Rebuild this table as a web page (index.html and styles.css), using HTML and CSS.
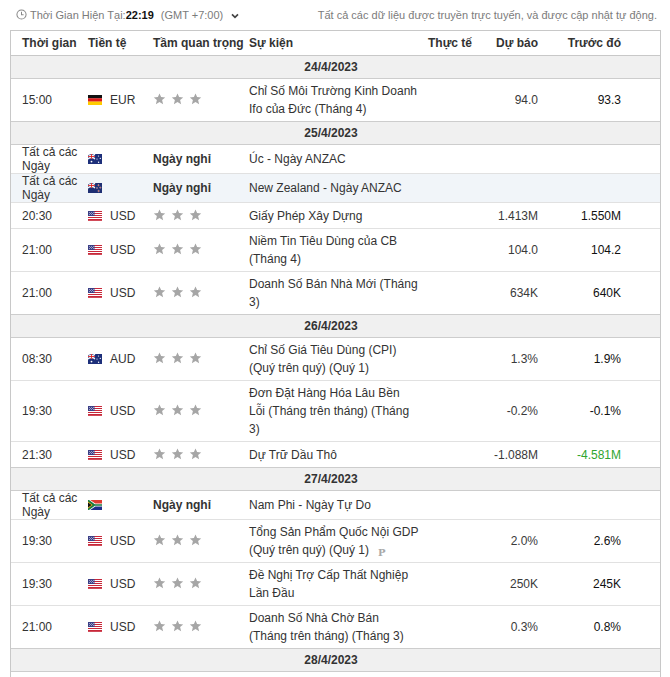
FILE: index.html
```html
<!DOCTYPE html>
<html lang="vi">
<head>
<meta charset="utf-8">
<title>Lịch kinh tế</title>
<link rel="stylesheet" href="styles.css">
</head>
<body>
<svg class="sprite" aria-hidden="true">
  <defs>
    <symbol id="star" viewBox="0 0 12 12"><path d="M6 0.4 L7.6 4.1 L11.7 4.4 L8.6 7.1 L9.6 11.2 L6 9 L2.4 11.2 L3.4 7.1 L0.3 4.4 L4.4 4.1 Z"/></symbol>
    <symbol id="f-de" viewBox="0 0 14 10"><rect width="14" height="3.4" fill="#111"/><rect y="3.3" width="14" height="3.4" fill="#dd1c1c"/><rect y="6.6" width="14" height="3.4" fill="#ffcc00"/></symbol>
    <symbol id="f-us" viewBox="0 0 14 10"><rect width="14" height="10" fill="#fff"/><g fill="#c8283a"><rect y="0" width="14" height="1"/><rect y="2" width="14" height="1"/><rect y="4" width="14" height="1"/><rect y="6" width="14" height="1"/><rect y="8" width="14" height="1.2"/><rect y="9.2" width="14" height="0.8"/></g><rect width="6.5" height="5" fill="#3b3f86"/><g fill="#d9dcf0"><rect x="1" y="1" width="1" height="0.6"/><rect x="3" y="1" width="1" height="0.6"/><rect x="5" y="1" width="1" height="0.6"/><rect x="2" y="2.2" width="1" height="0.6"/><rect x="4" y="2.2" width="1" height="0.6"/><rect x="1" y="3.4" width="1" height="0.6"/><rect x="3" y="3.4" width="1" height="0.6"/><rect x="5" y="3.4" width="1" height="0.6"/></g></symbol>
    <symbol id="f-au" viewBox="0 0 14 10"><rect width="14" height="10" fill="#1d2f7a"/><path d="M0 0 L7 5 M7 0 L0 5" stroke="#fff" stroke-width="1.2"/><path d="M3.5 0 V5 M0 2.5 H7" stroke="#fff" stroke-width="1.6"/><path d="M3.5 0 V5 M0 2.5 H7" stroke="#d22" stroke-width="0.9"/><g fill="#fff"><circle cx="3.5" cy="7.6" r="0.9"/><circle cx="10.5" cy="2" r="0.6"/><circle cx="12.3" cy="4.4" r="0.6"/><circle cx="9" cy="5" r="0.6"/><circle cx="10.6" cy="8.2" r="0.7"/></g></symbol>
    <symbol id="f-nz" viewBox="0 0 14 10"><rect width="14" height="10" fill="#1f2f73"/><path d="M0 0 L7 5 M7 0 L0 5" stroke="#fff" stroke-width="1.2"/><path d="M3.5 0 V5 M0 2.5 H7" stroke="#fff" stroke-width="1.6"/><path d="M3.5 0 V5 M0 2.5 H7" stroke="#d22" stroke-width="0.9"/><g fill="#d42" stroke="#fff" stroke-width="0.3"><circle cx="10.5" cy="2.2" r="0.7"/><circle cx="12.3" cy="4.6" r="0.7"/><circle cx="9" cy="5" r="0.6"/><circle cx="10.6" cy="8" r="0.8"/></g></symbol>
    <symbol id="f-za" viewBox="0 0 14 10"><rect width="14" height="5" fill="#e03c31"/><rect y="5" width="14" height="5" fill="#1c2f8a"/><polygon points="0,0 2.2,0 7.3,3.5 14,3.5 14,6.5 7.3,6.5 2.2,10 0,10" fill="#fff"/><polygon points="0,0 1,0 6.8,4.2 14,4.2 14,5.8 6.8,5.8 1,10 0,10" fill="#1a7a40"/><polygon points="0,1.6 4.6,5 0,8.4" fill="#ffb81c"/><polygon points="0,2.5 3.5,5 0,7.5" fill="#111"/></symbol>
    <symbol id="f-jp" viewBox="0 0 14 10"><rect width="14" height="10" fill="#fff"/><circle cx="7" cy="5" r="3" fill="#bc002d"/></symbol>
  </defs>
</svg>

<div class="topbar">
  <div class="now">
    <svg class="clock" viewBox="0 0 12 12"><circle cx="6" cy="6" r="5" fill="none" stroke="#888" stroke-width="1.1"/><path d="M6 3 V6.3 H8.3" fill="none" stroke="#888" stroke-width="1.1"/></svg>
    <span class="lbl">Thời Gian Hiện Tại:</span><b class="clk">22:19</b><span class="tz">(GMT +7:00)</span>
    <svg class="chev" viewBox="0 0 8 6"><path d="M1 1.3 L4 4.3 L7 1.3" fill="none" stroke="#444" stroke-width="1.7"/></svg>
  </div>
  <div class="note">Tất cả các dữ liệu được truyền trực tuyến, và được cập nhật tự động.</div>
</div>

<div class="cal">
<table>
  <colgroup>
    <col class="w-time"><col class="w-cur"><col class="w-imp"><col class="w-ev"><col class="w-act"><col class="w-fc"><col class="w-prev"><col class="w-end">
  </colgroup>
  <thead>
    <tr><th class="time">Thời gian</th><th>Tiền tệ</th><th>Tầm quan trọng</th><th>Sự kiện</th><th class="num">Thực tế</th><th class="num">Dự báo</th><th class="num">Trước đó</th><th></th></tr>
  </thead>
  <tbody>
    <tr class="date"><td colspan="8">24/4/2023</td></tr>
    <tr>
      <td class="time">15:00</td>
      <td><svg class="flag"><use href="#f-de"/></svg>EUR</td>
      <td class="stars"><svg><use href="#star"/></svg><svg><use href="#star"/></svg><svg><use href="#star"/></svg></td>
      <td>Chỉ Số Môi Trường Kinh Doanh<br>Ifo của Đức (Tháng 4)</td>
      <td class="num"></td><td class="num fc">94.0</td><td class="num prev">93.3</td><td></td>
    </tr>

    <tr class="date"><td colspan="8">25/4/2023</td></tr>
    <tr class="holiday">
      <td class="time allday">Tất cả các<br>Ngày</td>
      <td><svg class="flag"><use href="#f-au"/></svg></td>
      <td class="hol">Ngày nghỉ</td>
      <td>Úc - Ngày ANZAC</td>
      <td></td><td></td><td></td><td></td>
    </tr>
    <tr class="holiday hover">
      <td class="time allday">Tất cả các<br>Ngày</td>
      <td><svg class="flag"><use href="#f-nz"/></svg></td>
      <td class="hol">Ngày nghỉ</td>
      <td>New Zealand - Ngày ANZAC</td>
      <td></td><td></td><td></td><td></td>
    </tr>
    <tr class="r1">
      <td class="time">20:30</td>
      <td><svg class="flag"><use href="#f-us"/></svg>USD</td>
      <td class="stars"><svg><use href="#star"/></svg><svg><use href="#star"/></svg><svg><use href="#star"/></svg></td>
      <td>Giấy Phép Xây Dựng</td>
      <td class="num"></td><td class="num fc">1.413M</td><td class="num prev">1.550M</td><td></td>
    </tr>
    <tr>
      <td class="time">21:00</td>
      <td><svg class="flag"><use href="#f-us"/></svg>USD</td>
      <td class="stars"><svg><use href="#star"/></svg><svg><use href="#star"/></svg><svg><use href="#star"/></svg></td>
      <td>Niềm Tin Tiêu Dùng của CB<br>(Tháng 4)</td>
      <td class="num"></td><td class="num fc">104.0</td><td class="num prev">104.2</td><td></td>
    </tr>
    <tr>
      <td class="time">21:00</td>
      <td><svg class="flag"><use href="#f-us"/></svg>USD</td>
      <td class="stars"><svg><use href="#star"/></svg><svg><use href="#star"/></svg><svg><use href="#star"/></svg></td>
      <td>Doanh Số Bán Nhà Mới (Tháng<br>3)</td>
      <td class="num"></td><td class="num fc">634K</td><td class="num prev">640K</td><td></td>
    </tr>

    <tr class="date"><td colspan="8">26/4/2023</td></tr>
    <tr>
      <td class="time">08:30</td>
      <td><svg class="flag"><use href="#f-au"/></svg>AUD</td>
      <td class="stars"><svg><use href="#star"/></svg><svg><use href="#star"/></svg><svg><use href="#star"/></svg></td>
      <td>Chỉ Số Giá Tiêu Dùng (CPI)<br>(Quý trên quý) (Quý 1)</td>
      <td class="num"></td><td class="num fc">1.3%</td><td class="num prev">1.9%</td><td></td>
    </tr>
    <tr>
      <td class="time">19:30</td>
      <td><svg class="flag"><use href="#f-us"/></svg>USD</td>
      <td class="stars"><svg><use href="#star"/></svg><svg><use href="#star"/></svg><svg><use href="#star"/></svg></td>
      <td>Đơn Đặt Hàng Hóa Lâu Bền<br>Lỗi (Tháng trên tháng) (Tháng<br>3)</td>
      <td class="num"></td><td class="num fc">-0.2%</td><td class="num prev">-0.1%</td><td></td>
    </tr>
    <tr class="r1">
      <td class="time">21:30</td>
      <td><svg class="flag"><use href="#f-us"/></svg>USD</td>
      <td class="stars"><svg><use href="#star"/></svg><svg><use href="#star"/></svg><svg><use href="#star"/></svg></td>
      <td>Dự Trữ Dầu Thô</td>
      <td class="num"></td><td class="num fc">-1.088M</td><td class="num up">-4.581M</td><td></td>
    </tr>

    <tr class="date"><td colspan="8">27/4/2023</td></tr>
    <tr class="holiday">
      <td class="time allday">Tất cả các<br>Ngày</td>
      <td><svg class="flag"><use href="#f-za"/></svg></td>
      <td class="hol">Ngày nghỉ</td>
      <td>Nam Phi - Ngày Tự Do</td>
      <td></td><td></td><td></td><td></td>
    </tr>
    <tr>
      <td class="time">19:30</td>
      <td><svg class="flag"><use href="#f-us"/></svg>USD</td>
      <td class="stars"><svg><use href="#star"/></svg><svg><use href="#star"/></svg><svg><use href="#star"/></svg></td>
      <td>Tổng Sản Phẩm Quốc Nội GDP<br>(Quý trên quý) (Quý 1)<span class="prelim">P</span></td>
      <td class="num"></td><td class="num fc">2.0%</td><td class="num prev">2.6%</td><td></td>
    </tr>
    <tr>
      <td class="time">19:30</td>
      <td><svg class="flag"><use href="#f-us"/></svg>USD</td>
      <td class="stars"><svg><use href="#star"/></svg><svg><use href="#star"/></svg><svg><use href="#star"/></svg></td>
      <td>Đề Nghị Trợ Cấp Thất Nghiệp<br>Lần Đầu</td>
      <td class="num"></td><td class="num fc">250K</td><td class="num prev">245K</td><td></td>
    </tr>
    <tr>
      <td class="time">21:00</td>
      <td><svg class="flag"><use href="#f-us"/></svg>USD</td>
      <td class="stars"><svg><use href="#star"/></svg><svg><use href="#star"/></svg><svg><use href="#star"/></svg></td>
      <td>Doanh Số Nhà Chờ Bán<br>(Tháng trên tháng) (Tháng 3)</td>
      <td class="num"></td><td class="num fc">0.3%</td><td class="num prev">0.8%</td><td></td>
    </tr>

    <tr class="date"><td colspan="8">28/4/2023</td></tr>
    <tr>
      <td class="time">10:00</td>
      <td><svg class="flag"><use href="#f-jp"/></svg>JPY</td>
      <td class="stars"><svg><use href="#star"/></svg><svg><use href="#star"/></svg><svg><use href="#star"/></svg></td>
      <td>Báo Cáo Chính Sách Tiền Tệ<br>của BoJ</td>
      <td class="num"></td><td class="num fc"></td><td class="num prev"></td><td></td>
    </tr>
  </tbody>
</table>
</div>
</body>
</html>
```

FILE: styles.css
```css
* { box-sizing: border-box; }

body {
  margin: 0;
  background: #fff;
  color: #333;
  font-family: "Liberation Sans", Arial, sans-serif;
  font-size: 12px;
}

.sprite {
  display: block;
  width: 0;
  height: 0;
  overflow: hidden;
}

/* top bar */
.topbar {
  height: 30px;
  display: flex;
  align-items: center;
  justify-content: space-between;
  padding: 0 13px 1px 16px;
  font-size: 11px;
  color: #7b7b7b;
}
.now {
  display: flex;
  align-items: center;
}
.clock {
  width: 11px;
  height: 11px;
  margin-right: 3px;
}
.clk {
  color: #111;
  font-weight: bold;
  margin-right: 7px;
}
.chev {
  width: 8px;
  height: 6px;
  margin-left: 8px;
  margin-top: 2px;
}

/* calendar table */
.cal {
  margin-left: 10px;
  width: 651px;
  border: 1px solid #c8c8c8;
  border-bottom: none;
}
table {
  width: 100%;
  border-collapse: separate;
  border-spacing: 0;
  table-layout: fixed;
}
.w-time { width: 77px; }
.w-cur { width: 65px; }
.w-imp { width: 96px; }
.w-ev { width: 176px; }
.w-act { width: 57px; }
.w-fc { width: 66px; }
.w-prev { width: 83px; }
.w-end { width: 29px; }

th {
  padding: 3px 0;
  line-height: 18px;
  font-weight: bold;
  text-align: left;
  color: #333;
  white-space: nowrap;
  border-bottom: 1px solid #c8c8c8;
}
td {
  padding: 3px 0;
  line-height: 18px;
  vertical-align: middle;
  white-space: nowrap;
  border-bottom: 1px solid #e1e1e1;
}
.time { padding-left: 11px; }
.num {
  text-align: right;
  padding-right: 10px;
}
.fc { color: #3a3a3a; }
.prev { color: #111; }
.r1 td {
  padding-top: 4px;
  padding-bottom: 3px;
}

.date td {
  padding: 2px 9px 2px 0;
  background: #f0f0f0;
  text-align: center;
  font-weight: bold;
  border-bottom-color: #cdcdcd;
}
tr:has(+ tr.date) td { border-bottom-color: #cdcdcd; }

.holiday .allday {
  padding-top: 0;
  padding-bottom: 0;
  line-height: 14px;
  white-space: normal;
}
.hover td { background: #f1f5f9; }
.hol { font-weight: bold; }

.flag {
  width: 14px;
  height: 10px;
  margin-right: 8px;
  vertical-align: -1px;
}

.stars svg {
  width: 13px;
  height: 12px;
  margin-right: 5px;
  fill: #a6a6a6;
  vertical-align: -1px;
}

.up { color: #2fa52f; }

.prelim {
  margin-left: 9px;
  font-family: "DejaVu Serif", "Liberation Serif", serif;
  font-weight: bold;
  font-size: 10px;
  line-height: 0;
  color: #a8a8a8;
  vertical-align: -2px;
}
```
